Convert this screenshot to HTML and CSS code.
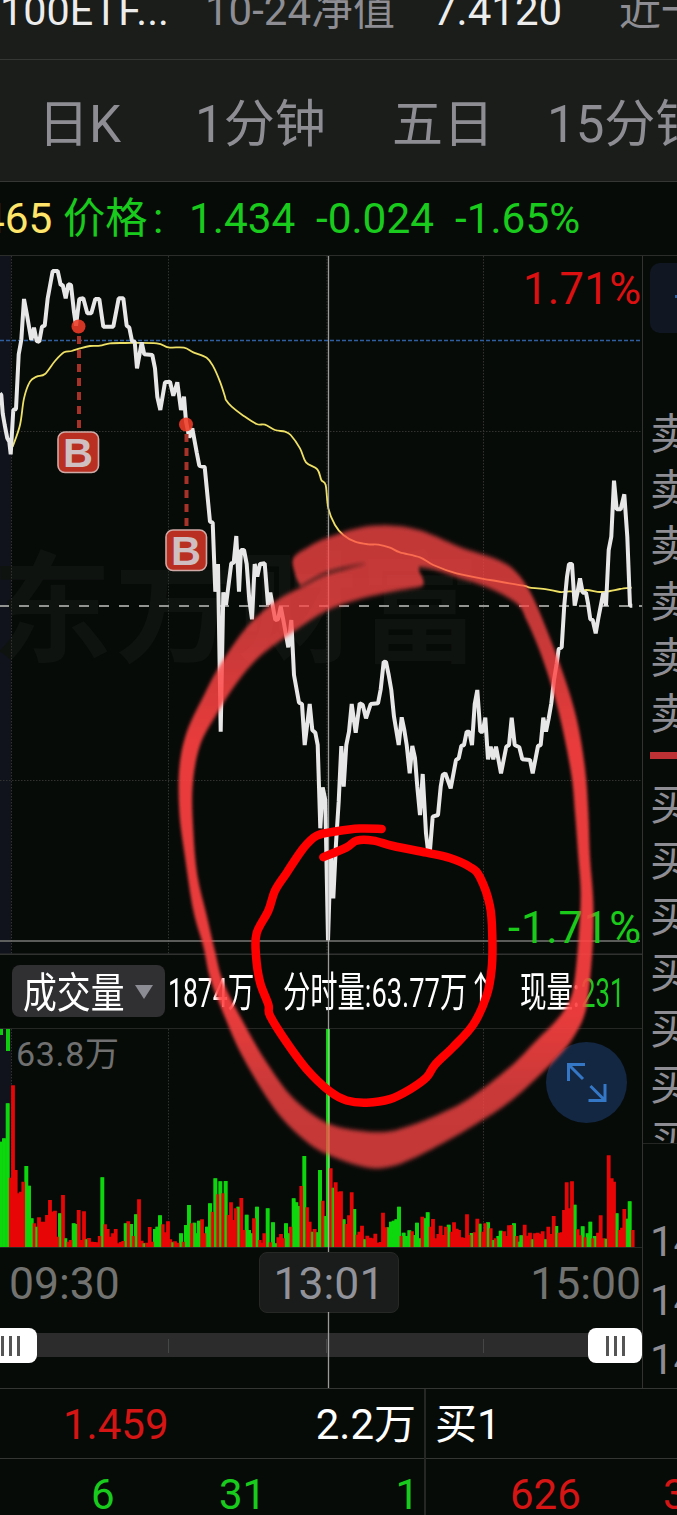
FILE: index.html
```
<!DOCTYPE html>
<html lang="zh-CN">
<head>
<meta charset="utf-8">
<title>分时行情</title>
<link rel="stylesheet" href="styles.css">
</head>
<body>
<main class="screen">
  <header class="summary">
    <span class="bright">100ETF...</span><span>10-24净值</span><span class="bright">7.4120</span><span>近一月</span>
  </header>
  <nav class="tabs"><span>日K</span><span>1分钟</span><span>五日</span><span>15分钟</span></nav>
  <div class="quote"><span class="avg">465</span><span>价格</span><span>:</span><span>1.434</span><span>-0.024</span><span>-1.65%</span></div>

  <div class="body">
    <section class="chart">
      <svg class="price" width="642" height="699" viewBox="0 256 642 699">
        <rect x="0" y="256" width="11" height="699" fill="#10131c"/>
        <text class="watermark" x="-8" y="653" textLength="488">东方财富</text>
        <g class="grid">
          <path d="M11.5 256V955M168.5 256V955M327 256V955M483.5 256V955M0 431.500H642M0 780.500H642"/>
        </g>
        <path d="M0 340.500H640" stroke="#2f5f9e" stroke-width="1.300" stroke-dasharray="4 2"/>
        <path d="M-1 606H642" stroke="#929492" stroke-width="1.800" stroke-dasharray="10 10"/>
        <path id="average" class="average"/>
        <path id="trend" class="trend"/>
        <path d="M0 941H640" stroke="#777875" stroke-width="1.500"/>
        <text class="limit up" x="641" y="304" text-anchor="end" textLength="118">1.71%</text>
        <text class="limit down" x="641" y="943" text-anchor="end" textLength="133">-1.71%</text>
        <path d="M0 954.500H642" stroke="#303230" stroke-width="2"/>
        <g class="trade">
          <path d="M79 333V432M186.500 431V529"/>
          <circle cx="78.500" cy="326.500" r="7"/><circle cx="186" cy="424.500" r="7"/>
          <rect x="58" y="432" width="40.500" height="40.500" rx="7"/><rect x="166" y="530" width="40.500" height="40.500" rx="7"/>
          <text x="63" y="467" textLength="30" lengthAdjust="spacingAndGlyphs">B</text><text x="171" y="565" textLength="30" lengthAdjust="spacingAndGlyphs">B</text>
        </g>
      </svg>

      <div class="volume-head">
        <button class="picker"><span class="narrow wide">成交量</span><i></i></button>
        <span class="cell total"><span class="narrow">1874万</span></span>
        <span class="cell minute"><span class="narrow">分时量:63.77万↑</span></span>
        <span class="cell now"><span class="narrow">现量:</span></span>
        <span class="cell last"><span class="narrow">231</span></span>
      </div>

      <svg class="volume" width="642" height="219" viewBox="0 1029 642 219">
        <rect x="0" y="1029" width="11" height="219" fill="#10131c"/>
        <g class="grid"><path d="M11.500 1029V1247M168.500 1029V1247M327 1029V1247M483.500 1029V1247"/></g>
        <path d="M0 1247.500H642" stroke="#252725"/>
        <g id="bars"></g>
        <path d="M8 1029V1051M1 1029V1035" stroke="#10cc10" stroke-width="4"/>
        <text x="16" y="1066" class="scale-label" textLength="103">63.8万</text>
        <circle cx="586.500" cy="1082.500" r="40.500" fill="#132742"/>
        <path d="M568.500 1081V1064.500H585M568.500 1064.500L583 1079M605 1084V1100.500H588.500M605 1100.500L590.500 1086" fill="none" stroke="#3477c6" stroke-width="3"/>
      </svg>

      <div class="axis"><span>09:30</span><span class="cursor-time">13:01</span><span>15:00</span></div>
      <div class="slider">
        <div class="handle first"><i></i><i></i><i></i></div>
        <div class="ticks"><b></b><b></b><b></b></div>
        <div class="handle"><i></i><i></i><i></i></div>
      </div>
    </section>

    <aside class="book">
      <div class="chip"><i></i></div>
      <div class="asks"><span>卖5</span><span>卖4</span><span>卖3</span><span>卖2</span><span>卖1</span><span>卖0</span></div>
      <div class="bar"></div>
      <div class="bids"><span>买1</span><span>买2</span><span>买3</span><span>买4</span><span>买5</span><span>买6</span><span>买7</span></div>
      <div class="times"><span>14:</span><span>14:</span><span>14:</span></div>
    </aside>
  </div>

  <div class="table first-row"><span class="red">1.459</span><span class="end">2.2万</span><span class="next">买1</span></div>
  <div class="table second-row"><span>6</span><span>31</span><span class="end">1</span><span class="next red">626</span><span class="red">3</span></div>

  <svg class="overlay" width="677" height="1515" viewBox="0 0 677 1515">
    <defs>
      <linearGradient id="ink" x1="0" y1="0" x2="0" y2="1">
        <stop offset="0" stop-color="#ff4646" stop-opacity=".75"/>
        <stop offset=".17" stop-color="#ff4545" stop-opacity=".77"/>
        <stop offset=".34" stop-color="#ff4040" stop-opacity=".91"/>
        <stop offset=".76" stop-color="#ff4040" stop-opacity=".91"/>
        <stop offset=".88" stop-color="#ff4646" stop-opacity=".78"/>
        <stop offset="1" stop-color="#ff4646" stop-opacity=".76"/>
      </linearGradient>
      <filter id="soft" x="-5%" y="-5%" width="110%" height="110%"><feGaussianBlur stdDeviation="5.500 4.200"/></filter>
    </defs>
    <path d="M328.500 256V1252M328.500 1312V1388" stroke="#b4b4b4" stroke-opacity=".85" stroke-width="1.300"/>
    <g transform="translate(160 500) scale(.33333 .44643)">
      <path id="brush" fill="url(#ink)" filter="url(#soft)"/>
      <path id="pen" class="pen"/>
    </g>
  </svg>
</main>
<script src="chart.js"></script>
</body>
</html>
```
FILE: styles.css
```
* { box-sizing: border-box; }
body { margin: 0; background: #070b08; }
.screen {
  position: relative;
  width: 677px;
  height: 1515px;
  overflow: hidden;
  background: #070b08;
  color: #8d8d93;
  font-family: Roboto, "Noto Sans CJK SC", sans-serif;
  font-size: 42px;
  white-space: nowrap;
}
.summary {
  display: grid;
  grid-template-columns: 205px 228px 186px 120px;
  height: 60px;
  line-height: 22px;
  font-size: 42px;
  background: #1a1d1a;
  border-bottom: 1px solid #343734;
}
.summary .bright { color: #ececec; }
.summary .bright:first-child { font-size: 41.3px; }
.tabs {
  display: grid;
  grid-template-columns: 157px 197px 155px 170px;
  height: 122px;
  padding: 3px 0 0 38px;
  line-height: 123px;
  font-size: 51px;
  background: #1a1d1a;
  border-bottom: 1px solid #343734;
}
.quote {
  display: grid;
  grid-template-columns: 82px 90px 36px 127px 139px 150px;
  height: 74px;
  margin-left: -19px;
  line-height: 73px;
  font-size: 42.300px;
  color: #18cb1c;
  border-bottom: 1px solid #2b2d2b;
}
.quote .avg { color: #ffe56a; }

.body { display: flex; height: 1133px; border-bottom: 1px solid #343634; }
.chart { width: 643px; border-right: 1px solid #303330; }
.chart svg { display: block; }
.grid path { fill: none; stroke: #30332f; stroke-width: 1; stroke-dasharray: 1.5 1.5; }
.watermark { font: 700 120px "Noto Sans CJK SC", sans-serif; fill: #0f130f; }
.trend { fill: none; stroke: #e7e7e7; stroke-width: 4; stroke-linejoin: bevel; }
.average { fill: none; stroke: #eee065; stroke-width: 1.8; }
.limit { font-size: 43.5px; }
.limit.up { fill: #dc1010; }
.limit.down { fill: #1acb1a; }
.trade path { stroke: #a83228; stroke-width: 4; stroke-dasharray: 8 6; stroke-dashoffset: -3; fill: none; }
.trade circle { fill: #ef3b27; fill-opacity: .88; }
.trade rect { fill: #b93022; stroke: #cfaaa7; stroke-width: 1.6; }
.trade text { font: 700 40px "Liberation Sans", sans-serif; fill: #cfbfc2; }

.volume-head { display: flex; align-items: center; height: 74px; padding: 0 0 1px 12px; border-bottom: 1px solid #242724; color: #fff; font-size: 41.5px; }
.picker { display: flex; align-items: center; width: 153px; height: 52px; padding: 0 11px 2px; border: 0; border-radius: 8px; background: #302f31; color: #fff; font: inherit; }
.picker .wide { width: 112px; transform: scaleX(.815); }
.picker i { border: 9px solid transparent; border-top: 14px solid #8c8c94; border-bottom: 0; margin-top: 3px; }
.narrow { display: inline-block; text-align: left; transform: scaleX(.64); transform-origin: left; }
.cell { width: 115px; padding: 3px 0 0 3px; line-height: 60px; }
.minute { width: 237px; }
.minute .narrow { transform: scaleX(.657); }
.now { width: 61px; }
.last { width: 60px; color: #18cb1c; }
.last .narrow { transform: scaleX(.62); }
.scale-label { font-size: 34px; fill: #707070; }

.axis { display: grid; grid-template-columns: 250px 140px 242px; height: 80px; padding: 4px 1px 0 9px; line-height: 65px; font-size: 44.5px; color: #727370; }
.axis span:last-child { text-align: right; }
.cursor-time { height: 61px; border: 1px solid #252825; border-radius: 8px; background: #191c1a; text-align: center; color: #92929a; line-height: 63px; }
.slider { display: flex; align-items: center; justify-content: space-between; height: 35px; background: linear-gradient(#2b2c2b, #2b2c2b) 0 5px / 640px 24px no-repeat; }
.handle { display: flex; justify-content: center; align-items: center; gap: 5px; width: 54px; height: 35px; border-radius: 8px; background: #fff; }
.handle.first { margin-left: -17px; }
.handle i { width: 3px; height: 20px; background: #555; }
.ticks { display: flex; width: 316px; justify-content: space-between; margin-right: -27px; }
.ticks b { width: 1px; height: 14px; background: #454747; }

.book { width: 34px; overflow: hidden; padding-left: 7px; font-size: 42px; }
.chip { width: 60px; height: 70px; margin: 7px 0 0; padding: 32px 0 0 25px; border-radius: 10px; background: #101722; }
.chip i { display: block; width: 10px; height: 3px; background: #2c5f9e; }
.asks { margin-top: 74px; }
.asks span, .bids span { display: block; width: 60px; height: 56px; line-height: 56px; }
.bar { height: 7px; margin: 9px 0 0; background: #bd3034; }
.bids { height: 365px; margin-top: 19px; overflow: hidden; }
.times { width: 60px; margin: 0 0 0 -7px; padding: 68px 0 0 7px; border-top: 1px solid #242624; }
.times span { display: block; height: 59px; line-height: 59px; }

.table { display: grid; color: #18cb1c; line-height: 70px; }
.table .red { color: #d51414; }
.table .end { text-align: right; padding-right: 8px; }
.table .next { border-left: 2px solid #252725; }
.first-row { grid-template-columns: 300px 124px 253px; height: 70px; border-bottom: 1px solid #343634; color: #fff; line-height: 71px; }
.first-row .red { padding-left: 63px; }
.first-row .next { padding-left: 9px; }
.second-row { grid-template-columns: 219px 118px 87px 239px 60px; height: 57px; line-height: 71px; }
.second-row span:first-child { padding-left: 91px; }
.second-row .end { padding-right: 5px; }
.second-row .next { padding-left: 84px; }

.overlay { position: absolute; left: 0; top: 0; }
.pen { fill: none; stroke: #f00; stroke-width: 8.5; stroke-linecap: round; stroke-linejoin: round; vector-effect: non-scaling-stroke; }
```
FILE: chart.js
```
const pairs = s => s.trim().split(/\s+/).map(p => p.split(",").map(Number));
const place = (s, dx, dy) => pairs(s).map(([x, y]) => [dx + x / 3, dy + y / 3]);
const line = pts => "M" + pts.map(p => p[0].toFixed(1) + " " + p[1].toFixed(1)).join("L");

// Catmull-Rom curve through every point
function smooth(pts, closed) {
  const n = pts.length;
  const at = i => closed ? pts[(i + n) % n] : pts[Math.max(0, Math.min(n - 1, i))];
  let d = "M" + pts[0];
  for (let i = 0; i < (closed ? n : n - 1); i++) {
    const [a, b, c, e] = [at(i - 1), at(i), at(i + 1), at(i + 2)];
    d += `C${b[0] + (c[0] - a[0]) / 6} ${b[1] + (c[1] - a[1]) / 6} ${c[0] - (e[0] - b[0]) / 6} ${c[1] - (e[1] - b[1]) / 6} ${c[0]} ${c[1]}`;
  }
  return d;
}

const trend = [
  ...place("0,415 4,420 8,475 14,510 22,550 28,560 32,598 40,465 48,462 56,298 64,255 72,132 80,175 94,255 102,218 110,258 118,260 126,215 134,212 143,130 158,48 173,48 182,90 188,90 197,130 205,88 213,90 222,172 228,212 238,132 250,130 262,175 274,175 286,132 298,132 310,215 340,215 356,130 370,130 380,212 388,218 396,258 404,260 411,340 425,262 433,298 457,300 465,340 472,425 481,465 495,382 510,380 520,422 532,382 543,465 552,425 558,500 568,548 577,520 590,592 598,632 614,636 630,800", 0, 255),
  ...place("158,368 166,575 174,492 182,995 190,577 198,615 214,490 221,488 229,408 237,575 243,450 252,450 260,492 268,600 276,658 284,492 292,530 300,492 314,490 324,615 331,578 346,660 354,658 362,620 370,660 385,742 394,660 402,825", 160, 400),
  ...place("57,248 66,252 74,375 89,252 97,330 106,338 113,375 121,625 128,502 136,540 144,962 152,700 160,835 168,670 176,545 184,378 191,500 199,375 207,335 215,252 227,338 239,250 248,254 258,295 272,252 294,250 302,208 311,125 318,126 326,165 334,210 342,290 356,375 365,292 373,330 380,375 389,460 397,378 405,415 412,500 420,585 428,462 438,640 444,692 450,690 458,590 474,585 482,500", 280, 620),
  ...place("68,945 76,940 92,985 108,900 116,895 124,858 132,855 140,815 148,815 156,855 164,732 172,690 181,815 188,815 196,773 204,898 212,860 220,898 228,860 243,940 259,860 267,855 275,773 284,855 298,862 307,898 330,900 338,940 354,858 362,855 370,773 378,815 386,775 394,730 402,660 410,610 416,567 425,562 433,435 441,350 447,312 456,312 464,437 472,400 480,355 488,398 498,398 504,430 511,478 518,480 527,520 535,475 550,398 558,437 566,270 574,230 582,62 590,148 602,148 613,103 622,230 630,437 637,437", 420, 460)
];
document.getElementById("trend").setAttribute("d", line(trend));

const average = [
  ...place("38,575 60,510 72,430 90,380 110,365 135,357 165,318 192,292 215,288 240,280 270,273 300,272 330,265 375,264 470,265 505,277 552,278 580,292 620,308 640,335 660,380 675,425", 0, 255),
  ...place("198,0 215,20 250,47 290,72 315,74 345,90 375,95 392,105 420,145 438,187 472,208 484,240 497,255 505,325 525,375 550,405 585,425 625,433 655,434 690,443 720,457", 160, 400),
  ...place("0,292 40,315 110,340 210,360 310,377 330,383 380,388 420,396 450,394 470,396 500,390 540,396 570,393 600,387 635,383", 420, 460)
];
document.getElementById("average").setAttribute("d", smooth(average, false));

const green = [
  ...place("2,185 12,175 23,70 79,258 87,317 95,415 109,440 180,400 196,475 221,430 228,432 258,478 307,292 377,430 393,432 408,403 431,490 465,447 472,440 480,406 517,487 543,460 558,435 567,375 583,428 590,460 597,422 621,440 630,370 646,295 661,304 677,303 715,380 740,404 747,450 754,460 771,380 803,385 819,427 827,490 858,430 866,460 881,355 889,367 895,378 913,228 936,455 951,457 960,270 975,408 984,-155 998,323", 0, 1080),
  ...place("41,268 73,237 103,328 175,292 183,275 191,272 199,268 207,230 221,308 229,318 238,301 254,315 261,278 269,325 285,265 293,247 356,284 425,309 449,281 474,277 489,330 505,318 512,302 552,280 567,335 574,316 606,328 646,328 679,288 734,224 758,289 773,310 781,275 795,318 827,326 860,250 891,266 899,214", 330, 1130)
];
const red = [
  ...place("39,16 32,293 47,270 56,340 63,335 70,305 102,430 117,412 125,425 133,425 141,405 150,360 158,395 165,392 173,470 189,345 205,485 212,480 236,390 244,480 252,394 267,474 275,485 283,486 291,487 299,468 315,433 323,447 331,470 339,460 347,447 355,490 363,486 370,483 385,424 400,468 417,358 425,482 440,488 449,441 457,485 488,433 496,457 504,424 511,478 525,484 533,488 550,485 575,430 606,418 614,460 637,395 653,343 668,340 685,405 693,367 700,420 708,385 724,354 732,450 762,415 779,480 787,488 793,460 811,487 835,472 843,462 850,475 872,440 904,318 921,382 929,425 944,447 968,362 992,265 1007,307 1017,335", 0, 1080),
  ...place("17,157 25,260 33,184 49,282 57,256 65,187 81,314 88,305 96,287 112,317 120,323 128,325 136,311 144,338 152,336 159,248 167,292 213,318 246,304 277,260 301,290 309,267 316,325 325,312 332,287 340,315 348,290 364,305 372,277 380,296 387,300 395,322 402,324 411,253 419,315 434,307 442,266 458,305 466,280 482,295 497,325 522,304 530,318 537,286 545,285 560,318 584,284 591,317 600,308 615,310 623,308 631,312 638,304 655,290 664,312 671,258 687,308 695,307 702,240 710,157 718,235 726,154 743,298 750,316 765,322 788,325 804,308 812,256 820,325 836,76 845,145 852,155 868,300 876,293 883,237 908,300", 330, 1130)
];
const columns = pts => pts.map(([x, y]) => `M${x.toFixed(1)} 1247V${y.toFixed(1)}`).join("");
document.getElementById("bars").innerHTML =
  `<path d="${columns(green)}" stroke="#0cd40c" stroke-width="4"/>` +
  `<path d="${columns(red)}" stroke="#e80505" stroke-width="3.8"/>` +
  `<path d="${columns(green)}" stroke="#10d810" stroke-opacity=".6" stroke-width="2.6"/>`;

const brush = pairs("400,130 450,103 500,85 600,62 690,57 780,68 900,105 1000,130 1060,155 1110,205 1160,290 1210,390 1250,490 1275,600 1285,700 1290,800 1300,900 1298,1000 1283,1120 1268,1165 1248,1194 1220,1225 1164,1270 1056,1344 935,1404 800,1460 700,1492 620,1495 500,1465 420,1425 340,1360 250,1250 190,1150 150,1070 130,1000 100,920 75,800 58,700 58,600 80,520 130,440 180,370 260,285 350,225 430,193 500,167 600,146 650,140 700,138 768,142 778,160 790,180 782,194 700,205 600,222 500,248 400,295 300,350 230,410 170,480 120,550 98,640 100,740 112,840 140,930 165,1010 190,1080 250,1170 320,1260 400,1340 500,1395 600,1413 680,1415 740,1404 830,1378 925,1342 1050,1270 1130,1210 1190,1165 1230,1120 1245,1068 1257,970 1262,880 1255,800 1245,700 1235,620 1210,520 1180,430 1140,340 1100,270 1070,232 980,195 880,170 800,152 700,146 640,145 600,144 500,162 430,189 418,188 405,165");
document.getElementById("brush").setAttribute("d", smooth(brush, true));

const pen = pairs("665,737 600,736 530,742 470,752 430,780 380,835 345,875 325,920 290,970 288,1020 300,1080 325,1130 330,1155 380,1215 440,1275 510,1325 560,1345 620,1350 690,1342 750,1320 800,1293 825,1265 880,1225 940,1175 980,1110 995,1050 997,980 990,910 960,845 930,822 870,802 800,790 700,775 640,763 590,763 560,778 490,800");
document.getElementById("pen").setAttribute("d", smooth(pen, false));
```
